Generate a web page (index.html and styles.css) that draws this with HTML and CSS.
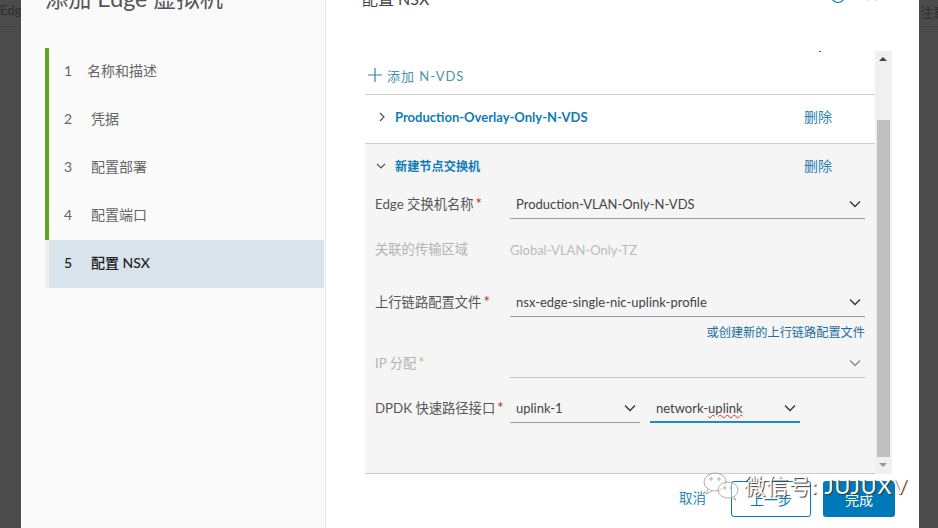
FILE: index.html
```html
<!DOCTYPE html>
<html lang="zh">
<head>
<meta charset="utf-8">
<title>添加 Edge 虚拟机</title>
<link rel="stylesheet" href="styles.css">
</head>
<body>
<div class="page">
  <div class="backdrop left"><span class="bg-text">Edg</span></div>
  <div class="modal">
    <aside class="nav">
      <h1 class="title">添加 Edge 虚拟机</h1>
      <ol class="steps">
        <li class="step done"><span class="num">1</span><span class="first">名称和描述</span></li>
        <li class="step done"><span class="num">2</span><span>凭据</span></li>
        <li class="step done"><span class="num">3</span><span>配置部署</span></li>
        <li class="step done"><span class="num">4</span><span>配置端口</span></li>
        <li class="step active"><span class="num">5</span><span>配置 NSX</span></li>
      </ol>
    </aside>
    <main class="main">
      <header class="head">
        <h2 class="subtitle">配置 NSX</h2>
        <div class="head-icons">
          <svg class="help" viewBox="0 0 16 16"><circle cx="8" cy="8" r="6.5"/><path d="M8 7v4M8 4.5v1"/></svg>
          <svg class="close" viewBox="0 0 16 16"><path d="M3 3l10 10M13 3L3 13"/></svg>
        </div>
      </header>
      <div class="scroller">
        <span class="speck"></span>
        <div class="content">
          <div class="add"><svg class="plus" viewBox="0 0 14 14"><path d="M7 0v14M0 7h14"/></svg><span>添加 N-VDS</span></div>
          <div class="row">
            <svg class="chev-r" viewBox="0 0 8 10"><path d="M2 1l4 4-4 4"/></svg>
            <span class="row-name">Production-Overlay-Only-N-VDS</span>
            <span class="del">删除</span>
          </div>
          <section class="expanded">
            <div class="row open">
              <svg class="chev-d" viewBox="0 0 10 8"><path d="M1 2l4 4 4-4"/></svg>
              <span class="row-name">新建节点交换机</span>
              <span class="del">删除</span>
            </div>
            <div class="form">
              <label class="lab r1">Edge 交换机名称<i>*</i></label>
              <div class="sel r1"><span>Production-VLAN-Only-N-VDS</span><svg class="chev" viewBox="0 0 12 8"><path d="M1 1.5l5 5 5-5"/></svg></div>
              <label class="lab r2 off">关联的传输区域</label>
              <div class="static r2">Global-VLAN-Only-TZ</div>
              <label class="lab r3">上行链路配置文件<i>*</i></label>
              <div class="sel r3"><span>nsx-edge-single-nic-uplink-profile</span><svg class="chev" viewBox="0 0 12 8"><path d="M1 1.5l5 5 5-5"/></svg></div>
              <a class="create r4">或创建新的上行链路配置文件</a>
              <label class="lab r5 off">IP 分配<i>*</i></label>
              <div class="sel r5 dis"><span></span><svg class="chev" viewBox="0 0 12 8"><path d="M1 1.5l5 5 5-5"/></svg></div>
              <label class="lab r6">DPDK 快速路径接口<i>*</i></label>
              <div class="pair r6">
                <div class="sel small"><span>uplink-1</span><svg class="chev" viewBox="0 0 12 8"><path d="M1 1.5l5 5 5-5"/></svg></div>
                <div class="sel small focus"><span>network-<u>uplink</u></span><svg class="chev" viewBox="0 0 12 8"><path d="M1 1.5l5 5 5-5"/></svg></div>
              </div>
            </div>
          </section>
        </div>
        <div class="scrollbar">
          <span class="arrow up"></span>
          <span class="thumb"></span>
          <span class="arrow down"></span>
        </div>
      </div>
      <footer class="foot">
        <a class="cancel">取消</a>
        <button class="btn outline">上一步</button>
        <button class="btn solid">完成</button>
      </footer>
    </main>
  </div>
  <div class="backdrop right"><span class="bg-text">注意</span></div>
  <div class="mark">
    <svg class="wechat" viewBox="0 0 38 30"><ellipse cx="13" cy="11" rx="11" ry="9"/><path d="M6 18l-2 5 6-3"/><ellipse cx="26" cy="19" rx="10" ry="8"/><path d="M32 25l2 4-5-2"/><circle cx="9" cy="8" r="1.2"/><circle cx="17" cy="8" r="1.2"/><circle cx="23" cy="17" r="1"/><circle cx="29" cy="17" r="1"/></svg>
    <span>微信号: JUJUXV</span>
  </div>
</div>
</body>
</html>
```
FILE: styles.css
```css
* { box-sizing: border-box; }
html, body { margin: 0; padding: 0; }
body { font-family: "Lato", "Noto Sans CJK SC", sans-serif; font-size: 13px; color: #565656; }
.page { position: relative; display: flex; width: 938px; height: 528px; overflow: hidden; background: #4b4b4b; }
.backdrop { flex: none; height: 528px; overflow: hidden; background: #4b4b4b; }
.backdrop.left { width: 21px; }
.backdrop.right { width: 19px; }
.bg-text { display: block; height: 27px; padding-top: 2px; border-bottom: 1px solid #424242; font-size: 13px; color: #2e2e2e; white-space: nowrap; }
.backdrop.right .bg-text { padding-left: 1px; }
.modal { flex: none; display: flex; width: 898px; height: 560px; background: #fff; }
.nav { flex: none; width: 305px; background: #fafafa; border-right: 1px solid #e8e8e8; }
.title { margin: -18px 0 0; padding-left: 24px; height: 66px; font-size: 23.2px; font-weight: 400; line-height: 32px; color: #565656; white-space: nowrap; }
.steps { list-style: none; margin: 0 0 0 24px; padding: 0; width: 279px; }
.step { display: flex; align-items: center; height: 48px; padding: 0 0 4px 15px; border-left: 4px solid #62a420; font-size: 14px; color: #666; }
.step .num { width: 27px; font-size: 14px; }
.step .first { margin-left: -4px; }
.step.active { border-left-color: #eee; background: #d8e3eb; color: #222; font-weight: 500; }
.main { flex: 1; display: flex; flex-direction: column; min-width: 0; }
.head { display: flex; justify-content: space-between; height: 51px; padding: 0 39px 0 36px; }
.subtitle { margin: -12px 0 0; font-size: 16px; font-weight: 400; line-height: 22px; color: #444; }
.head-icons { display: flex; gap: 18px; margin-top: -12px; height: 16px; }
.help { width: 16px; height: 16px; fill: none; stroke: #0079b8; stroke-width: 1.2; }
.close { width: 16px; height: 16px; fill: none; stroke: #ccc; stroke-width: 1.2; }
.scroller { position: relative; flex: none; display: flex; height: 423px; margin-left: 39px; width: 527px; }
.speck { position: absolute; left: 454px; top: 0; width: 2px; height: 1px; background: #555; }
.content { flex: none; width: 510px; }
.add { display: flex; align-items: center; gap: 5px; height: 44px; padding: 5px 0 0 3px; border-bottom: 1px solid #ccc; color: #4c8fb2; font-size: 13px; letter-spacing: 1px; }
.plus { width: 14px; height: 14px; fill: none; stroke: #2b86b4; stroke-width: 1.2; }
.row { display: flex; align-items: center; height: 49px; padding: 0 0 4px 13px; border-bottom: 1px solid #ccc; }
.row.open { border-bottom: 0; height: 45px; padding-bottom: 2px; }
.chev-r { width: 8px; height: 10px; fill: none; stroke: #555; stroke-width: 1.2; margin-right: 9px; }
.chev-d { width: 10px; height: 8px; fill: none; stroke: #555; stroke-width: 1.2; margin: 0 9px 0 -2px; }
.row-name { flex: 1; font-size: 13px; font-weight: 700; color: #0f7cb5; }
.open .row-name { font-size: 12.2px; }
.del { width: 71px; margin-bottom: 2px; font-size: 14px; color: #2c7fae; }
.expanded { height: 330px; background: #f5f5f5; border-bottom: 1px solid #ccc; }
.form { display: grid; grid-template-columns: 135px 355px; grid-template-rows: 30px 54px 44px 24px 37px 45px; padding-left: 10px; align-items: end; }
.lab { padding-bottom: 1px; font-size: 13.3px; color: #565656; line-height: 28px; white-space: nowrap; }
.lab i { color: #c92100; font-style: normal; font-size: 15px; margin-left: 2px; }
.lab.off { color: #b3b3b3; }
.lab.off i { color: #dba99c; }
.r1 { grid-row: 1; } .r2 { grid-row: 2; } .r3 { grid-row: 3; } .r4 { grid-row: 4; } .r5 { grid-row: 5; } .r6 { grid-row: 6; }
.lab.r2 { align-self: start; padding-top: 16px; }
.sel { display: flex; align-items: center; justify-content: space-between; height: 28px; padding: 0 4px 2px 6px; border-bottom: 1px solid #9a9a9a; font-size: 13px; color: #444; }
.sel.dis { border-bottom-color: #c2c2c2; }
.sel.dis .chev { stroke: #888; }
.chev { width: 12px; height: 8px; fill: none; stroke: #333; stroke-width: 1.3; }
.static { align-self: start; padding-top: 23px; font-size: 13px; color: #bbb; }
.create { grid-column: 2; align-self: start; padding-top: 6px; text-align: right; font-size: 12.2px; line-height: 20px; color: #1c6f9e; }
.pair { display: flex; gap: 10px; }
.small { width: 130px; }
.small.focus { width: 150px; padding: 0 4px 0 6px; border-bottom: 2px solid #1a8fc0; }
.small.focus u { text-decoration: underline wavy #d33; text-decoration-thickness: 1px; }
.scrollbar { flex: none; display: flex; flex-direction: column; align-items: flex-start; width: 17px; height: 423px; background: #f0f0f0; }
.arrow { flex: none; display: block; width: 0; height: 0; margin: 6px 0 0 4px; border-left: 4px solid transparent; border-right: 4px solid transparent; }
.arrow.up { border-bottom: 4px solid #444; margin-bottom: 59px; }
.arrow.down { border-top: 4px solid #999; margin-top: 6px; }
.thumb { flex: none; width: 13px; height: 337px; margin-left: 2px; background: #c0c0c0; }
.foot { display: flex; align-items: flex-start; height: 60px; padding: 7px 0 0 353px; }
.cancel { width: 52px; line-height: 34px; font-size: 13.5px; color: #2a86bb; }
.btn { height: 36px; padding: 0; border-radius: 3px; font: inherit; font-size: 14px; }
.outline { width: 80px; margin-right: 12px; background: #fff; border: 1px solid #0079b8; color: #0079b8; }
.solid { width: 72px; background: #0079b8; border: 0; color: #fff; }
.mark { position: absolute; left: 702px; top: 471px; display: flex; align-items: center; gap: 4px; color: #fff; font-size: 21.5px; line-height: 28px; letter-spacing: 1px; white-space: nowrap; text-shadow: 1px 1px 1px #333; }
.wechat { width: 38px; height: 30px; fill: rgba(255,255,255,.45); stroke: #999; stroke-width: .8; }
```
